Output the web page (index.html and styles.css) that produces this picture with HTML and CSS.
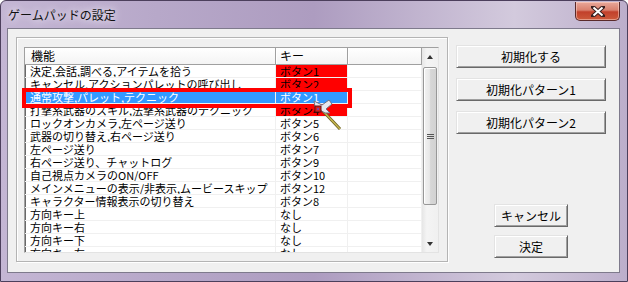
FILE: index.html
```html
<!DOCTYPE html>
<html lang="ja">
<head>
    <meta charset="UTF-8">
    <title>ゲームパッドの設定</title>
    <link rel="stylesheet" href="styles.css">
</head>
<body>
    <div class="window">
        <!-- Title bar -->
        <div class="titlebar">
            <span class="title">ゲームパッドの設定</span>
            <div class="close">
                <svg width="14" height="11" viewBox="0 0 14 11">
                    <path d="M2 1 L12 10 M12 1 L2 10" stroke="#3a2020" stroke-width="4" stroke-linecap="square"/>
                    <path d="M2.5 1.5 L11.5 9.5 M11.5 1.5 L2.5 9.5" stroke="#fff" stroke-width="2"/>
                </svg>
            </div>
        </div>

        <!-- Client area -->
        <div class="client">
            <div class="group">
                <div class="list">
                    <div class="list-body">
                        <div class="header">
                            <div class="hcell col-name">機能</div>
                            <div class="hcell col-key">キー</div>
                            <div class="hcell col-extra"></div>
                        </div>
                        <div class="row"><div class="cell col-name">決定,会話,調べる,アイテムを拾う</div><div class="cell col-key marked">ボタン1</div><div class="cell col-extra"></div></div>
                        <div class="row"><div class="cell col-name">キャンセル,アクションパレットの呼び出し</div><div class="cell col-key marked">ボタン2</div><div class="cell col-extra"></div></div>
                        <div class="row selected"><div class="cell col-name">通常攻撃,パレット,テクニック</div><div class="cell col-key">ボタン1</div><div class="cell col-extra"></div></div>
                        <div class="row"><div class="cell col-name">打撃系武器のスキル,法撃系武器のテクニック</div><div class="cell col-key marked">ボタン4</div><div class="cell col-extra"></div></div>
                        <div class="row"><div class="cell col-name">ロックオンカメラ,左ページ送り</div><div class="cell col-key">ボタン5</div><div class="cell col-extra"></div></div>
                        <div class="row"><div class="cell col-name">武器の切り替え,右ページ送り</div><div class="cell col-key">ボタン6</div><div class="cell col-extra"></div></div>
                        <div class="row"><div class="cell col-name">左ページ送り</div><div class="cell col-key">ボタン7</div><div class="cell col-extra"></div></div>
                        <div class="row"><div class="cell col-name">右ページ送り、チャットログ</div><div class="cell col-key">ボタン9</div><div class="cell col-extra"></div></div>
                        <div class="row"><div class="cell col-name">自己視点カメラのON/OFF</div><div class="cell col-key">ボタン10</div><div class="cell col-extra"></div></div>
                        <div class="row"><div class="cell col-name">メインメニューの表示/非表示,ムービースキップ</div><div class="cell col-key">ボタン12</div><div class="cell col-extra"></div></div>
                        <div class="row"><div class="cell col-name">キャラクター情報表示の切り替え</div><div class="cell col-key">ボタン8</div><div class="cell col-extra"></div></div>
                        <div class="row"><div class="cell col-name">方向キー上</div><div class="cell col-key">なし</div><div class="cell col-extra"></div></div>
                        <div class="row"><div class="cell col-name">方向キー右</div><div class="cell col-key">なし</div><div class="cell col-extra"></div></div>
                        <div class="row"><div class="cell col-name">方向キー下</div><div class="cell col-key">なし</div><div class="cell col-extra"></div></div>
                        <div class="row"><div class="cell col-name">方向キー左</div><div class="cell col-key">なし</div><div class="cell col-extra"></div></div>
                    </div>

                    <!-- Scrollbar -->
                    <div class="scrollbar">
                        <div class="arrow up"></div>
                        <div class="thumb"><span class="grip"></span></div>
                        <div class="arrow down"></div>
                    </div>
                </div>
            </div>

            <div class="side">
                <div class="btn wide">初期化する</div>
                <div class="btn wide">初期化パターン1</div>
                <div class="btn wide">初期化パターン2</div>
                <div class="bottom-buttons">
                    <div class="btn small">キャンセル</div>
                    <div class="btn small">決定</div>
                </div>
            </div>
        </div>

        <!-- Red annotation box over the selected row -->
        <div class="mark-box"></div>

        <!-- Game cursor -->
        <svg class="cursor" width="40" height="36" viewBox="0 0 40 36">
            <path d="M18 13 L35 31" stroke="#6b6020" stroke-width="3"/>
            <path d="M18 13 L35 31" stroke="#c8b850" stroke-width="1.4"/>
            <path d="M9 3 L17 7 L24 2 L27 6 L21 11 L25 15 L20 15 L15 12 L10 9 Z" fill="#e8e8ee" stroke="#707080" stroke-width="1"/>
            <rect x="10" y="8" width="6" height="6" fill="#d02020" stroke="#601010" stroke-width="1"/>
            <rect x="12" y="10" width="2" height="2" fill="#8040a0"/>
        </svg>
    </div>
</body>
</html>
```

FILE: styles.css
```css
* {
    box-sizing: border-box;
    margin: 0;
    padding: 0;
}

body {
    width: 628px;
    height: 282px;
    overflow: hidden;
    font-family: "Noto Sans CJK JP", "Noto Sans", sans-serif;
    font-size: 12px;
    color: #000;
    background: #fff;
}

.window {
    position: relative;
    width: 628px;
    height: 282px;
    border: 1px solid #4c3f5c;
    border-radius: 6px 6px 0 0;
    background: linear-gradient(90deg, #c4b6d4 0%, #b7a8c9 25%, #ad9cc0 50%, #d3cadd 82%, #bcaecb 100%);
    display: flex;
    flex-direction: column;
    overflow: hidden;
}

/* Title bar */
.titlebar {
    height: 27px;
    display: flex;
    justify-content: space-between;
    align-items: flex-start;
}

.title {
    margin: 6px 0 0 7px;
    line-height: 16px;
    font-size: 12px;
    color: #111;
    text-shadow: 0 0 6px #ece6f2, 0 0 10px #ece6f2;
}

.close {
    width: 45px;
    height: 19px;
    margin: 1px 7px 0 0;
    border: 1px solid #5a2a2a;
    border-top: none;
    border-radius: 0 0 5px 5px;
    background: linear-gradient(180deg, #e9a89a 0%, #d9806e 45%, #c2402b 55%, #cc5a3c 100%);
    box-shadow: inset 0 0 0 1px rgba(255, 220, 210, 0.5);
    display: flex;
    justify-content: center;
    align-items: center;
}

/* Client area */
.client {
    height: 245px;
    margin: 0 7px 0 6px;
    border: 1px solid #7e7a8c;
    background: #f0f0f0;
    display: flex;
}

.group {
    width: 432px;
    height: 225px;
    margin: 8px 0 0 8px;
    padding: 9px 0 0 7px;
    border: 1px solid #b4b4b4;
    box-shadow: inset 1px 1px 0 #fff, 1px 1px 0 #fff;
}

/* List view */
.list {
    width: 415px;
    height: 206px;
    border: 1px solid #a0a0a0;
    border-right-color: #e3e3e3;
    border-bottom-color: #e3e3e3;
    box-shadow: inset 1px 1px 0 #696969;
    background: #fff;
    display: flex;
    overflow: hidden;
}

.list-body {
    width: 397px;
    overflow: hidden;
    font-size: 11px;
}

.header {
    display: flex;
    height: 17px;
    background: linear-gradient(180deg, #fff 0%, #f4f4f4 100%);
    border-bottom: 1px solid #a0a0a0;
}

.hcell {
    height: 16px;
    line-height: 16px;
    padding-left: 6px;
    font-size: 12px;
    border-right: 1px solid #a0a0a0;
    box-shadow: 1px 0 0 #fff;
}

.col-name {
    width: 251px;
}

.col-key {
    width: 72px;
}

.col-extra {
    width: 74px;
}

.hcell.col-key {
    padding-left: 4px;
}

.row {
    display: flex;
    height: 13px;
    border-bottom: 1px solid #f0f0f0;
}

.cell {
    height: 12px;
    line-height: 12px;
    padding-left: 5px;
    white-space: nowrap;
    overflow: hidden;
    border-right: 1px solid #f0f0f0;
}

.cell.col-key {
    padding-left: 4px;
}

.cell.marked {
    background: #ff0000;
}

.row.selected .col-name,
.row.selected .col-key {
    background: #3399ff;
    color: #fff;
}

/* Scrollbar */
.scrollbar {
    width: 16px;
    display: flex;
    flex-direction: column;
    background: linear-gradient(90deg, #e6e6e6 0%, #f4f4f4 30%, #f0f0f0 100%);
}

.arrow {
    height: 17px;
    display: flex;
    justify-content: center;
    align-items: center;
}

.arrow::before {
    content: "";
    border-left: 3px solid transparent;
    border-right: 3px solid transparent;
}

.arrow.up::before {
    border-bottom: 4px solid #333;
}

.arrow.down {
    margin-top: auto;
    height: 16px;
}

.arrow.down::before {
    border-top: 4px solid #333;
}

.thumb {
    height: 138px;
    margin: 2px 1px 0 1px;
    border: 1px solid #979797;
    border-radius: 2px;
    background: linear-gradient(90deg, #f2f2f2 0%, #e8e8e8 45%, #d6d6d6 55%, #d2d2d2 100%);
    box-shadow: inset 1px 1px 0 #fff;
    display: flex;
    justify-content: center;
    align-items: center;
}

.grip {
    width: 7px;
    height: 5px;
    border-top: 1px solid #555;
    border-bottom: 1px solid #555;
    background: linear-gradient(180deg, transparent 1px, #555 1px, #555 2px, transparent 2px);
}

/* Buttons */
.side {
    width: 150px;
    margin-left: 8px;
    padding: 16px 0 14px;
    display: flex;
    flex-direction: column;
}

.btn {
    height: 23px;
    line-height: 21px;
    text-align: center;
    background: #f0f0f0;
    border: 1px solid;
    border-color: #e3e3e3 #696969 #696969 #e3e3e3;
    box-shadow: inset 1px 1px 0 #fff, inset -1px -1px 0 #a0a0a0;
}

.btn.wide {
    width: 150px;
    margin-bottom: 10px;
}

.bottom-buttons {
    margin-top: auto;
    display: flex;
    flex-direction: column;
    align-items: center;
    gap: 8px;
}

.btn.small {
    width: 74px;
}

/* Overlays */
.mark-box {
    position: absolute;
    left: 21px;
    top: 87px;
    width: 330px;
    height: 20px;
    border: 4px solid #ff0000;
}

.cursor {
    position: absolute;
    left: 304px;
    top: 97px;
}
```
